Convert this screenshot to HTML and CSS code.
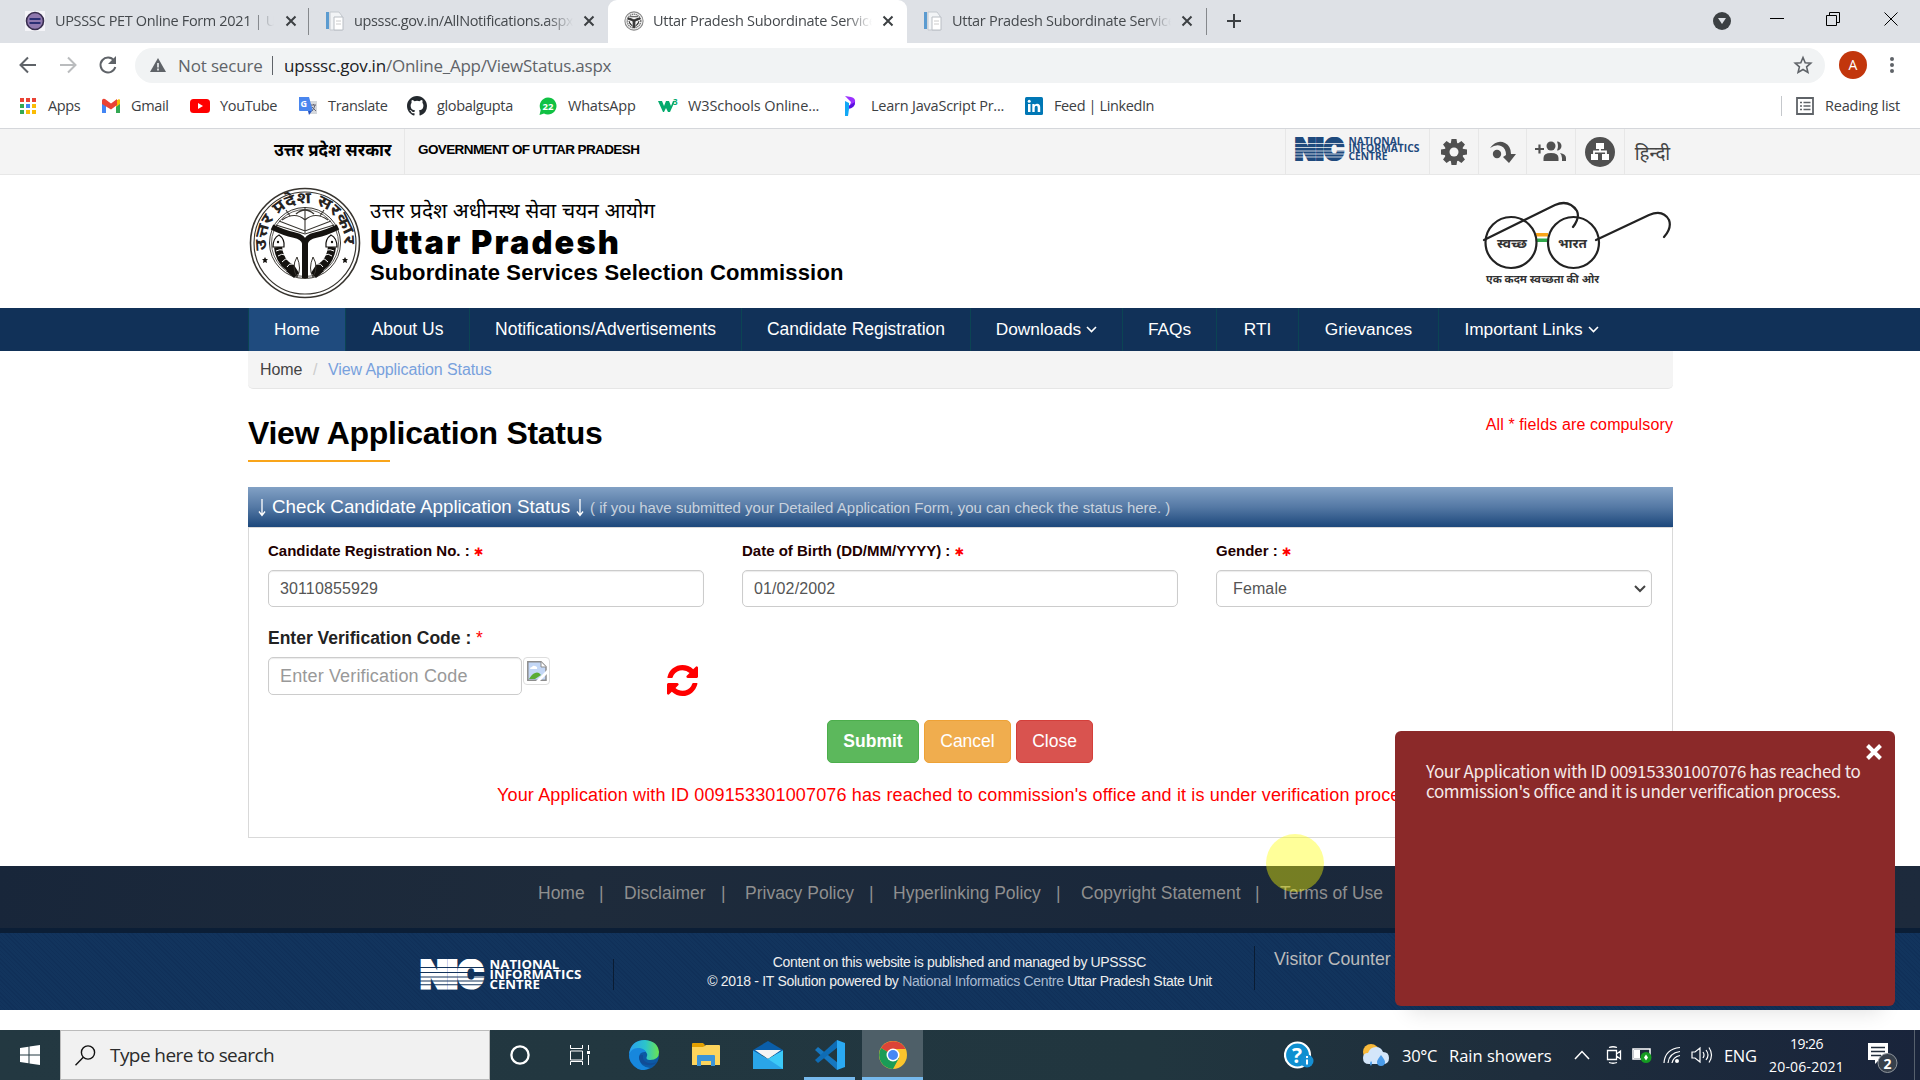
FILE: index.html
```html
<!DOCTYPE html>
<html lang="en">
<head>
<meta charset="utf-8">
<title>Uttar Pradesh Subordinate Services Selection Commission</title>
<link rel="stylesheet" href="styles.css">
</head>
<body>
<svg class="defs" width="0" height="0">
  <defs>
    <symbol id="x" viewBox="0 0 12 12"><path d="M1.500 1.500l9 9M10.500 1.500l-9 9" stroke="#3c4043" stroke-width="2" fill="none"/></symbol>
    <symbol id="page" viewBox="0 0 20 20"><path d="M1 1h3v17H1z" fill="#5b9bd0"/><path d="M5 1h9l3 4v14H5z" fill="#f2f4f6" stroke="#c3c8ce"/><path d="M9 6h9v13H9z" fill="#fff" stroke="#b9bec4"/><path d="M11 10h5M11 13h5" stroke="#ccc"/></symbol>
    <symbol id="nic" viewBox="0 0 126 24">
      <text x="1" y="22.500" class="nic-big" textLength="49" lengthAdjust="spacingAndGlyphs">NIC</text>
      <g class="nic-lines"><path d="M0 6.500h52M0 10.500h52M0 14h52M0 17h52M0 20h52"/></g>
      <text x="54.500" y="7.600" class="nic-small" textLength="54" lengthAdjust="spacingAndGlyphs">NATIONAL</text>
      <text x="54.500" y="15.400" class="nic-small" textLength="71" lengthAdjust="spacingAndGlyphs">INFORMATICS</text>
      <text x="54.500" y="23.200" class="nic-small" textLength="39" lengthAdjust="spacingAndGlyphs">CENTRE</text>
    </symbol>
    <symbol id="emblem" viewBox="0 0 112 112">
      <g fill="none" stroke="#37342f">
        <circle cx="56" cy="56" r="54.500" stroke-width="1.600" fill="#fff"/><circle cx="56" cy="56" r="51" stroke-width="1.200"/>
        <circle cx="56" cy="56" r="35.500" stroke-width="1"/><circle cx="56" cy="56" r="33.500" stroke-width=".8"/>
        <path d="M30 34l26 10 26-10M27 38l29 9 29-9M33 33Q46 24 56 33Q66 24 79 33M56 20v26M41 29l-4-6M71 29l4-6" stroke-width="1.100"/>
        <path d="M47 27q9-8 18 0" stroke-width="1.500"/>
      </g>
      <g fill="none" stroke="#14120f">
        <path d="M23 40q12 6 22 8 10 2 11 9 1-7 11-9 10-2 22-8" stroke-width="5.500"/>
        <path d="M56 54v37" stroke-width="6"/>
        <path d="M29 60q2 17 15 22M83 60q-2 17-15 22" stroke-width="8"/>
      </g>
      <g fill="#fff" stroke="#14120f" stroke-width="1.200"><path d="M24 60q0-9 6-12 6 4 5 12zM88 60q0-9-6-12-6 4-5 12z"/></g>
      <g fill="#14120f">
        <circle cx="29" cy="55" r="1.200"/><circle cx="83" cy="55" r="1.200"/>
        <path d="M37 84l8-6 5 8-5 5zM75 84l-8-6-5 8 5 5zM16 70l1 2h2l-1.500 1.500.5 2.500-2-1-2 1 .5-2.500L13 72h2zM96 70l1 2h2l-1.500 1.500.5 2.500-2-1-2 1 .5-2.500L93 72h2z"/>
      </g>
      <g fill="none" stroke="#fff" stroke-width="1"><path d="M27 64q4-2 7-1M29 69q4-3 7-1M33 75q3-4 7-3M38 80q2-4 6-3M85 64q-4-2-7-1M83 69q-4-3-7-1M79 75q-3-4-7-3M74 80q-2-4-6-3"/></g>
      <g fill="none" stroke="#37342f"><path d="M48 70q-6 10 0 20 5-8 0-20M64 70q6 10 0 20-5-8 0-20"/></g>
      <path id="arc" d="M18.500 66A39 39 0 1 1 93.500 66" fill="none"/>
      <text class="emblem-text"><textPath href="#arc" textLength="132" lengthAdjust="spacingAndGlyphs" startOffset="3">उत्तर प्रदेश सरकार</textPath></text>
    </symbol>
  </defs>
</svg>

<header class="tabstrip">
  <div class="tab"><svg viewBox="0 0 20 20"><path d="M0 0h20v20H0z" fill="#f4f4f8"/><circle cx="10" cy="10" r="8.500" fill="#8f78ae" stroke="#372d4e" stroke-width="1.600"/><path d="M4.500 8h11M4.500 12h11" stroke="#2b2f74" stroke-width="2"/></svg><span class="t1">UPSSSC PET Online Form 2021 | UP</span><svg class="close"><use href="#x"/></svg></div>
  <div class="tab ruled"><svg><use href="#page"/></svg><span class="t2">upsssc.gov.in/AllNotifications.aspx</span><svg class="close"><use href="#x"/></svg></div>
  <div class="tab active"><svg viewBox="0 0 112 112"><circle cx="56" cy="56" r="51" fill="#f5f5f5" stroke="#888" stroke-width="6"/><circle cx="56" cy="56" r="38" fill="none" stroke="#777" stroke-width="8" stroke-dasharray="7 4"/><path d="M23 38q22 6 33 12 11-6 33-12v8q-22 8-28 12v34h-10V58q-8-6-28-12zM28 56q2 20 20 28M84 56q-2 20-20 28M34 32h44" fill="#333" stroke="#333" stroke-width="5"/></svg><span class="t3">Uttar Pradesh Subordinate Services</span><svg class="close"><use href="#x"/></svg></div>
  <div class="tab"><svg><use href="#page"/></svg><span class="t3">Uttar Pradesh Subordinate Services</span><svg class="close"><use href="#x"/></svg></div>
  <div class="newtab"><svg width="16" height="16" viewBox="0 0 16 16"><path d="M8 1v14M1 8h14" stroke="#3c4043" stroke-width="2"/></svg></div>
  <div class="winbtns">
    <svg class="media" width="18" height="18" viewBox="0 0 18 18"><circle cx="9" cy="9" r="9" fill="#3c4043"/><path d="M5 6h8l-4 6z" fill="#dee1e6"/></svg>
    <svg width="14" height="14" viewBox="0 0 14 14"><path d="M0 6.500h14" stroke="#000"/></svg>
    <svg width="14" height="14" viewBox="0 0 14 14"><path d="M.5 3.500h10v10H.5zM3.500 3.500v-3h10v10h-3" fill="none" stroke="#000"/></svg>
    <svg width="14" height="14" viewBox="0 0 14 14"><path d="M.5.5l13 13M13.500.5l-13 13" stroke="#000"/></svg>
  </div>
</header>

<div class="toolbar">
  <svg width="20" height="20" viewBox="0 0 20 20"><path d="M18 10H3M10 2.500L2.500 10l7.500 7.500" fill="none" stroke="#5f6368" stroke-width="2"/></svg>
  <svg width="20" height="20" viewBox="0 0 20 20"><path d="M2 10h15M10 2.500l7.500 7.500-7.500 7.500" fill="none" stroke="#babcbe" stroke-width="2"/></svg>
  <svg width="20" height="20" viewBox="0 0 20 20"><path d="M16 5.500A7.500 7.500 0 1 0 17.300 12" fill="none" stroke="#5f6368" stroke-width="2"/><path d="M18 1v8h-8z" fill="#5f6368"/></svg>
  <div class="omnibox">
    <svg width="16" height="14" viewBox="0 0 16 14"><path d="M8 0l8 14H0z" fill="#5f6368"/><path d="M8 5v4.500M8 10.500v2" stroke="#f1f3f4" stroke-width="1.600"/></svg>
    <span class="notsecure">Not secure</span><i></i>
    <span class="url"><b>upsssc.gov.in</b>/Online_App/ViewStatus.aspx</span>
    <svg width="20" height="20" viewBox="0 0 20 20"><path d="M10 2.500l2.200 5.200 5.600.5-4.200 3.700 1.300 5.500L10 14.500l-4.900 2.900 1.300-5.500-4.200-3.700 5.600-.5z" fill="none" stroke="#5f6368" stroke-width="1.600"/></svg>
  </div>
  <div class="avatar">A</div>
  <svg width="6" height="18" viewBox="0 0 6 18"><circle cx="3" cy="3" r="2" fill="#5f6368"/><circle cx="3" cy="9" r="2" fill="#5f6368"/><circle cx="3" cy="15" r="2" fill="#5f6368"/></svg>
</div>

<nav class="bookmarks">
  <a><svg viewBox="0 0 20 20"><path d="M2 2h4v4H2zM8 2h4v4H8zM14 2h4v4h-4z" fill="#ea4335"/><path d="M2 8h4v4H2zM2 14h4v4H2z" fill="#34a853"/><path d="M8 8h4v4H8z" fill="#4285f4"/><path d="M8 14h4v4H8zM14 8h4v4h-4zM14 14h4v4h-4z" fill="#fbbc05"/></svg><span class="b1">Apps</span></a>
  <a><svg viewBox="0 0 20 20"><path d="M1 4h4v13H1z" fill="#4285f4"/><path d="M15 4h4v13h-4z" fill="#34a853"/><path d="M15 5l3-2q1 0 1 2v3l-4 3z" fill="#fbbc04"/><path d="M1 5q0-3 3-2l6 4.500L16 3v6l-6 4.500L1 8z" fill="#ea4335"/></svg><span class="b2">Gmail</span></a>
  <a><svg viewBox="0 0 20 20"><rect y="3" width="20" height="14" rx="3.500" fill="#f00"/><path d="M8 7v6l5-3z" fill="#fff"/></svg><span class="b3">YouTube</span></a>
  <a><svg viewBox="0 0 20 20"><path d="M8 5h11v13H11z" fill="#d5d8dc"/><path d="M1 1h10l4 14H2q-1 0-1-1z" fill="#4a86ee"/><path d="M10 15h4l-3 4z" fill="#2553c0"/><text x="2.500" y="11" font-size="9" font-family="Open Sans" font-weight="700" fill="#fff">G</text><path d="M13 9h5M15.500 8v1M17 9q-1 4-3 6M14 11l4 4" stroke="#667" fill="none"/></svg><span class="b4">Translate</span></a>
  <a><svg viewBox="0 0 16 16"><path fill="#24292e" d="M8 0C3.580 0 0 3.580 0 8c0 3.540 2.290 6.530 5.470 7.590.4.070.55-.17.55-.38 0-.19-.01-.82-.01-1.490-2.010.37-2.530-.49-2.690-.94-.09-.23-.48-.94-.82-1.130-.28-.15-.68-.52-.01-.53.63-.01 1.080.58 1.230.82.72 1.210 1.870.87 2.330.66.070-.52.28-.87.51-1.070-1.780-.2-3.640-.89-3.640-3.950 0-.87.31-1.590.82-2.150-.08-.2-.36-1.020.08-2.120 0 0 .67-.21 2.200.82a7.600 7.600 0 0 1 4 0c1.530-1.040 2.200-.82 2.200-.82.44 1.100.16 1.920.08 2.120.51.56.82 1.270.82 2.150 0 3.070-1.870 3.750-3.650 3.950.29.25.54.73.54 1.480 0 1.070-.01 1.930-.01 2.200 0 .21.15.46.55.38A8.010 8.010 0 0 0 16 8c0-4.420-3.580-8-8-8z"/></svg><span class="b5">globalgupta</span></a>
  <a><svg viewBox="0 0 20 20"><path d="M10 1.500a8.500 8.500 0 1 1-4 16L1.500 19l1.200-5A8.500 8.500 0 0 1 10 1.500z" fill="#10c143"/><text x="4.500" y="13.500" font-size="9.500" font-family="Open Sans" font-weight="700" fill="#fff">22</text></svg><span class="b6">WhatsApp</span></a>
  <a><svg viewBox="0 0 20 20"><path d="M0 5h4l2 5 2-5h3l2 5 2-5h2l-5 11h-2L8 12l-2 4H5z" fill="#04aa6d"/><text x="15" y="8.500" font-size="8" font-family="Open Sans" font-weight="700" fill="#04aa6d">3</text></svg><span class="b7">W3Schools Online...</span></a>
  <a><svg viewBox="0 0 20 20"><path d="M4 0l6 1q5 1 4 6 0 4-6 5l2-6z" fill="#9b30ff"/><path d="M4 12l10-6q0 6-7 7z" fill="#5a10e0"/><path d="M4 5l4 2v6l-1 7H4z" fill="#12a8f5"/></svg><span class="b8">Learn JavaScript Pr...</span></a>
  <a><svg viewBox="0 0 20 20"><rect x="1" y="1" width="18" height="18" rx="1.500" fill="#0077b5"/><path d="M4 8h2.500v8H4zM8.300 8h2.300v1q1-1.300 2.600-1.300 3 0 3 3.600V16h-2.500v-4.300q0-1.900-1.300-1.900-1.700 0-1.700 2V16H8.300z" fill="#fff"/><circle cx="5.200" cy="5.200" r="1.500" fill="#fff"/></svg><span class="b9">Feed | LinkedIn</span></a>
  <a class="reading"><svg viewBox="0 0 20 20"><path d="M2 2h16v16H2z" fill="none" stroke="#5f6368" stroke-width="1.800"/><path d="M5 6.500h2M5 10h2M5 13.500h2M8.500 6.500h7M8.500 10h7M8.500 13.500h7" stroke="#5f6368" stroke-width="1.700"/></svg><span class="b10">Reading list</span></a>
</nav>

<main class="site">
  <div class="govbar">
    <span class="gov-hi">उत्तर प्रदेश सरकार</span>
    <span class="gov-en">GOVERNMENT OF UTTAR PRADESH</span>
    <div class="tools">
      <span class="nic-blue"><svg width="126" height="24"><use href="#nic"/></svg></span>
      <span><svg width="26" height="26" viewBox="0 0 26 26"><g fill="#505050"><circle cx="13" cy="13" r="9.500"/><g id="teeth"><path d="M10.500 0h5l1 6h-7zM10.500 26h5l1-6h-7zM0 10.500v5l6 1v-7zM26 10.500v5l-6 1v-7z"/></g><use href="#teeth" transform="rotate(45 13 13)"/></g><circle cx="13" cy="13" r="4.500" fill="#f4f4f4"/></svg></span>
      <span><svg width="28" height="24" viewBox="0 0 28 24"><circle cx="8" cy="14" r="4.200" fill="#505050"/><path d="M1 8Q8-1 16 3q6 3 6 11h5l-7 9-6-6 3-2q0-7-5-9-5-2-11 2z" fill="#505050"/></svg></span>
      <span><svg width="32" height="24" viewBox="0 0 32 24"><path d="M0 9h9M4.500 4.500v9" stroke="#505050" stroke-width="2.200"/><circle cx="16" cy="6" r="4.500" fill="#505050"/><path d="M8.500 21v-3q0-5 7.500-5t7.500 5v3zM22 1.500a4.500 4.500 0 1 1 0 9q2-4 0-9zM25 13q6 1 6 5v3h-4v-3q0-3-2-5z" fill="#505050"/></svg></span>
      <span><svg width="30" height="30" viewBox="0 0 30 30"><circle cx="15" cy="15" r="15" fill="#505050"/><path d="M11 6h8v6h-8zM6 17h7v6H6zM17 17h7v6h-7z" fill="#fff"/><path d="M15 12v3M9 18v-3.500h12V18" fill="none" stroke="#fff" stroke-width="1.800"/></svg></span>
      <span class="lang">हिन्दी</span>
    </div>
  </div>

  <div class="brand">
    <svg class="emblem" width="112" height="112"><use href="#emblem"/></svg>
    <div class="names">
      <div class="n1">उत्तर प्रदेश अधीनस्थ सेवा चयन आयोग</div>
      <div class="n2">Uttar Pradesh</div>
      <div class="n3">Subordinate Services Selection Commission</div>
    </div>
    <svg class="swachh" width="190" height="90" viewBox="1483 200 190 90">
      <path d="M1537 233h12v3.500h-12z" fill="#f9a51a"/><path d="M1537 238.500h12v3.500h-12z" fill="#2fa84a"/>
      <g fill="none" stroke="#222" stroke-width="2.200" stroke-linecap="round"><circle cx="1512" cy="242.500" r="25.500"/><circle cx="1574.500" cy="242.500" r="25.500"/><path d="M1485 240L1556 205q14-6 22 6 3 7-4 16M1597 240L1650 215q14-6 20 5 3 8-5 17"/></g>
      <text x="1498" y="248" class="sw" textLength="30" lengthAdjust="spacingAndGlyphs">स्वच्छ</text>
      <text x="1559" y="248" class="sw" textLength="29" lengthAdjust="spacingAndGlyphs">भारत</text>
      <text x="1487" y="283" class="sw tag" textLength="113" lengthAdjust="spacingAndGlyphs">एक कदम स्वच्छता की ओर</text>
    </svg>
  </div>

  <nav class="mainnav"><div class="navgrid">
    <a class="on">Home</a><a>About Us</a><a>Notifications/Advertisements</a><a>Candidate Registration</a><a>Downloads <svg width="11" height="7" viewBox="0 0 11 7"><path d="M1 1l4.500 4.500L10 1" fill="none" stroke="#fff" stroke-width="1.600"/></svg></a><a>FAQs</a><a>RTI</a><a>Grievances</a><a>Important Links <svg width="11" height="7" viewBox="0 0 11 7"><path d="M1 1l4.500 4.500L10 1" fill="none" stroke="#fff" stroke-width="1.600"/></svg></a>
  </div></nav>

  <section class="content">
    <div class="crumbs"><span>Home</span><i>/</i><a>View Application Status</a></div>
    <div class="headline"><h1>View Application Status</h1><p>All * fields are compulsory</p></div>
    <div class="panel">
      <div class="panel-head"><svg width="8" height="18" viewBox="0 0 8 18"><path d="M4 0v16M1 12.500l3 4 3-4" fill="none" stroke="#fff" stroke-width="1.300"/></svg><span class="ph1">Check Candidate Application Status</span><svg width="8" height="18" viewBox="0 0 8 18"><path d="M4 0v16M1 12.500l3 4 3-4" fill="none" stroke="#fff" stroke-width="1.300"/></svg><span class="ph2">( if you have submitted your Detailed Application Form, you can check the status here. )</span></div>
      <div class="panel-body">
        <div class="fields">
          <label><span>Candidate Registration No. : <em>✱</em></span><div class="input">30110855929</div></label>
          <label><span>Date of Birth (DD/MM/YYYY) : <em>✱</em></span><div class="input">01/02/2002</div></label>
          <label><span>Gender : <em>✱</em></span><div class="input select">Female<svg width="12" height="8" viewBox="0 0 12 8"><path d="M1 1l5 5 5-5" fill="none" stroke="#444" stroke-width="2"/></svg></div></label>
        </div>
        <div class="vlabel">Enter Verification Code : <em>*</em></div>
        <div class="verify">
          <div class="input code">Enter Verification Code</div>
          <div class="broken"><svg width="20" height="20" viewBox="0 0 20 20"><path d="M.8.800h13.200l5 5v13.400H.8z" fill="#c3d7f6" stroke="#8d8d8d" stroke-width="1.500"/><path d="M14 1v5h5" fill="#fff" stroke="#8d8d8d"/><path d="M3 8q0-2 2-2 1-2 3-1 3 1 2 3z" fill="#fff"/><path d="M2 18q5-8 10-6l2 2-6 4z" fill="#5aac34"/><path d="M9 20l11-11v4l-7 7z" fill="#fff"/></svg></div>
          <svg class="refresh" width="31" height="31" viewBox="0 0 1536 1536"><path fill="#f00" d="M1511 928q0 5-1 7-64 268-268 434.500T764 1536q-146 0-282.500-55T238 1324l-129 129q-19 19-45 19t-45-19-19-45V960q0-26 19-45t45-19h448q26 0 45 19t19 45-19 45l-137 137q71 66 161 102t187 36q134 0 250-65t186-179q11-17 53-117 8-23 30-23h192q13 0 22.500 9.500t9.500 22.500zM1536 128v448q0 26-19 45t-45 19h-448q-26 0-45-19t-19-45 19-45l138-138Q969 256 768 256q-134 0-250 65T332 500q-11 17-53 117-8 23-30 23H50q-13 0-22.500-9.500T18 608v-7q65-268 270-434.500T768 0q146 0 284 55.500T1297 212l130-129q19-19 45-19t45 19 19 45z"/></svg>
        </div>
        <div class="buttons"><button class="submit">Submit</button><button class="cancel">Cancel</button><button class="closeb">Close</button></div>
        <p class="result">Your Application with ID 009153301007076 has reached to commission's office and it is under verification process.</p>
      </div>
    </div>
  </section>

  <footer>
    <div class="links"><a>Home</a><i>|</i><a>Disclaimer</a><i>|</i><a>Privacy Policy</a><i>|</i><a>Hyperlinking Policy</a><i>|</i><a>Copyright Statement</a><i>|</i><a>Terms of Use</a></div>
    <div class="credits">
      <div class="nic-white"><svg width="165" height="31"><use href="#nic"/></svg></div>
      <div class="legal"><p class="l1">Content on this website is published and managed by UPSSSC</p><p class="l2">© 2018 - IT Solution powered by <a>National Informatics Centre</a> Uttar Pradesh State Unit</p></div>
      <div class="visitors">Visitor Counter</div>
    </div>
  </footer>
</main>

<div class="pointer"></div>
<aside class="toast"><svg width="18" height="18" viewBox="0 0 18 18"><path d="M2.500 2.500l13 13M15.500 2.500l-13 13" stroke="#fff" stroke-width="4"/></svg><p>Your Application with ID 009153301007076 has reached to<br><span>commission's office and it is under verification process.</span></p></aside>

<div class="taskbar">
  <div class="start"><svg width="20" height="20" viewBox="0 0 20 20"><path d="M0 3l8.500-1.200v7.700H0zM9.500 1.500L20 0v9.500H9.500zM0 10.500h8.500v7.700L0 17zM9.500 10.500H20V20L9.500 18.500z" fill="#fff"/></svg></div>
  <div class="search"><svg width="21" height="21" viewBox="0 0 21 21"><circle cx="13" cy="7.500" r="6.600" fill="none" stroke="#111" stroke-width="1.400"/><path d="M8.300 12.300L.5 20.200" stroke="#111" stroke-width="1.400"/></svg><span>Type here to search</span></div>
  <div class="apps">
    <span><svg width="20" height="20" viewBox="0 0 20 20"><circle cx="10" cy="10" r="8.600" fill="none" stroke="#fff" stroke-width="2.300"/></svg></span>
    <span><svg width="20" height="20" viewBox="0 0 20 20"><path d="M.5 0v3.500h12V0M.5 6h12v9H.5zM.5 20v-3.500h12V20M18.500 0v5M18.500 10v10" fill="none" stroke="#fff"/><path d="M17 6h3v3h-3z" fill="#fff"/></svg></span>
    <span><svg width="30" height="30" viewBox="0 0 30 30"><defs><linearGradient id="e1"><stop stop-color="#2a9ff0"/><stop offset=".55" stop-color="#2cc4cb"/><stop offset="1" stop-color="#6be44f"/></linearGradient></defs><circle cx="15" cy="15" r="15" fill="#0c59a4"/><path d="M0 14Q2 0 16 0q13 1 14 12 0 8-9 8-5 0-3-4 1-2-2-5-6-5-12 0z" fill="url(#e1)"/><path d="M0 15q2-7 9-7 6 0 8 4-7-1-7 6 1 9 11 10-9 5-16-2Q0 21 0 15z" fill="#1787dd"/><path d="M10 17q0 7 8 8 6 1 10-3-5 2-9 1-6-2-5-8-3-1-4 2z" fill="#114c96"/></svg></span>
    <span><svg width="28" height="24" viewBox="0 0 28 24"><path d="M0 1q0-1 1-1h10l2 2-2 4H0z" fill="#e3a000"/><path d="M0 4h11l3-2h13q1 0 1 1v19H0z" fill="#fdd45c"/><path d="M5 23V13q0-1 1-1h16q1 0 1 1v10h-4v-5H9v5z" fill="#3c94d8"/></svg></span>
    <span><svg width="30" height="28" viewBox="0 0 30 28"><path d="M0 9L15 0l15 9v5H0z" fill="#0a5ea9"/><path d="M2 9h26L15 18z" fill="#f4f4f4"/><path d="M0 9.500l15 8.500 15-8.500V28H0z" fill="#2aa5e8"/><path d="M15 18L30 9.500V28z" fill="#3cc9f7"/></svg></span>
    <span class="run"><svg width="30" height="30" viewBox="0 0 30 30"><path d="M0 10l3-3 20 16-1 7z" fill="#1677c0"/><path d="M0 20l3 3L23 7l-1-7z" fill="#0e6cb5"/><path d="M22 0l8 3v24l-8 3z" fill="#2aa9f3"/></svg></span>
    <span class="run cur"><svg width="28" height="28" viewBox="0 0 28 28"><circle cx="14" cy="14" r="14" fill="#fbc52d"/><path d="M14 14L2 7A14 14 0 0 1 26.500 8H14z" fill="#dc4437"/><path d="M2 7A14 14 0 0 0 14 28l6-11-6-3z" fill="#1a9c57"/><circle cx="14" cy="14" r="6.500" fill="#fff"/><circle cx="14" cy="14" r="5" fill="#4688f4"/></svg></span>
  </div>
  <div class="tray">
    <span><svg width="30" height="28" viewBox="0 0 30 28"><circle cx="13.500" cy="14" r="12.500" fill="#0f8fd0" stroke="#fff" stroke-width="2.200"/><text x="8" y="22" font-family="Open Sans" font-size="21" font-weight="700" fill="#fff">?</text><circle cx="23" cy="20" r="6.500" fill="#168fd3"/><path d="M23 18.500v5M23 15v2" stroke="#fff" stroke-width="2"/></svg></span>
    <span><svg width="26" height="22" viewBox="0 0 26 22"><circle cx="8" cy="8" r="8" fill="#f8b93b"/><path d="M6 20q-6 0-6-6 0-5 5-5 2-6 8-6 5 0 7 5 6 0 6 6t-6 6z" fill="#d4e6fa"/><path d="M18 11q4 5 4 7a4 4 0 0 1-8 0q0-2 4-7z" fill="#4a9be8"/><path d="M8 17q2 2 0 5-2-2 0-5z" fill="#4a9be8"/></svg></span>
    <span class="wt k1">30°C</span><span class="wt k2">Rain showers</span>
    <span><svg width="16" height="10" viewBox="0 0 16 10"><path d="M1 9l7-7.500L15 9" fill="none" stroke="#fff" stroke-width="1.500"/></svg></span>
    <span><svg width="16" height="18" viewBox="0 0 16 18"><path d="M1.500 4.500h9v9h-9zM10.500 8l4-3v8l-4-3M3 1.500q4-1.500 8 0M3 16.500q4 1.500 8 0" fill="none" stroke="#fff" stroke-width="1.300"/></svg></span>
    <span><svg width="20" height="16" viewBox="0 0 20 16"><path d="M1 2h17v10H1z" fill="none" stroke="#fff" stroke-width="1.500"/><path d="M2 3h6v8H2z" fill="#fff"/><circle cx="14" cy="10.500" r="5.500" fill="#159b22"/><path d="M14 7.500l2 3-2 3-2-3z" fill="#fff"/></svg></span>
    <span><svg width="18" height="18" viewBox="0 0 18 18"><g fill="none" stroke="#fff" stroke-width="1.200"><path d="M1 17Q2 3 17 1.500M5 17Q6 7 17 5.500M9 17q1-6 8-7.500"/></g><circle cx="14" cy="15" r="2" fill="#fff"/></svg></span>
    <span><svg width="22" height="18" viewBox="0 0 22 18"><path d="M1 6h3l5-4v14l-5-4H1zM12 6q2 3 0 6M15 4q4 5 0 10M18 1.500q5 7.500 0 15" fill="none" stroke="#fff" stroke-width="1.200"/></svg></span>
    <span class="wt k3">ENG</span>
    <span class="clock"><b>19:26</b><b class="date">20-06-2021</b></span>
    <span class="notif"><svg width="32" height="32" viewBox="0 0 32 32"><path d="M1 1h20v17h-9l-4 4v-4H1z" fill="#fff"/><path d="M4 5.500h14M4 9.500h14M4 13.500h10" stroke="#222d3c" stroke-width="1.500"/><circle cx="20.500" cy="21" r="9.500" fill="#37404c" stroke="#8f959c"/><text x="16.500" y="26.500" font-family="Open Sans" font-weight="700" font-size="14" fill="#fff">2</text></svg></span>
  </div>
</div>
</body>
</html>
```
FILE: styles.css
```css
* { box-sizing: border-box; }
body { margin: 0; width: 1920px; height: 1080px; overflow: hidden; background: #fff; font-family: "Liberation Sans", Arial, "Noto Sans Devanagari", sans-serif; display: flex; flex-direction: column; position: relative; }
p, h1 { margin: 0; }
svg { display: block; flex: none; }
.defs { position: absolute; }
span, a, b, p { white-space: nowrap; }

/* browser chrome */
.tabstrip, .toolbar, .bookmarks, .taskbar { font-family: "Open Sans", "Noto Sans", sans-serif; }
.tabstrip { height: 43px; background: #dee1e6; padding-left: 9px; display: grid; grid-template-columns: 299px 300px 299px 299px 60px 1fr; }
.tab { display: grid; grid-template-columns: 20px 219px 12px; column-gap: 9px; padding-left: 16px; padding-bottom: 1px; align-items: center; position: relative; font-size: 14.500px; color: #45494d; }
.tab > svg { width: 20px; height: 20px; }
.tab .close { width: 12px; height: 12px; margin-left: 1px; }
.tab span { overflow: hidden; margin-bottom: 1px; -webkit-mask-image: linear-gradient(90deg, #000 88%, transparent); mask-image: linear-gradient(90deg, #000 88%, transparent); }
.tab.ruled { border-left: 1px solid #85888c; border-image: linear-gradient(transparent 9px, #85888c 9px, #85888c 34px, transparent 34px) 1; }
.tab.active { background: #fff; border-radius: 9px 9px 0 0; }
.tab:first-child { column-gap: 10px; }
.newtab { display: flex; align-items: center; padding-left: 19px; padding-bottom: 1px; border-left: 1px solid; border-image: linear-gradient(transparent 9px, #85888c 9px, #85888c 34px, transparent 34px) 1; }
.winbtns { display: grid; grid-template-columns: 58px 56px 58px 14px; justify-content: end; align-items: center; padding-right: 22px; padding-bottom: 6px; }
.media { margin: 5px 0 0 1px; }
.t1 { letter-spacing: -.34px; } .t2 { letter-spacing: -.36px; } .t3 { letter-spacing: -.28px; }
.toolbar { height: 45px; display: grid; grid-template-columns: 40px 40px 37px 1690px 23px 30px 9px 10px; align-items: center; padding: 0 0 1px 18px; }
.omnibox { height: 35px; border-radius: 18px; background: #f1f3f4; display: grid; grid-template-columns: 28px 94px 12px 1509px 20px; align-items: center; padding-left: 15px; font-size: 17px; color: #5f6368; }
.omnibox i { width: 1px; height: 19px; background: #5f6368; }
.omnibox b { font-weight: 400; color: #202124; }
.notsecure { letter-spacing: -.15px; } .url { letter-spacing: -.23px; }
.avatar { grid-column: 5 / 7; width: 28px; height: 28px; margin-left: 14px; border-radius: 50%; background: #c2360c; color: #fff; font-size: 14px; line-height: 28px; text-align: center; }
.toolbar > svg:last-child { grid-column: 7; margin-left: 11px; }
.bookmarks { height: 41px; border-bottom: 1px solid #d5d7db; display: grid; grid-template-columns: 83px 89px 108px 109px 131px 120px 183px 183px 757px 130px; padding: 0 0 5px 18px; align-items: center; font-size: 14.500px; color: #3c4043; }
.bookmarks a { display: grid; grid-template-columns: 20px 1fr; column-gap: 10px; align-items: center; }
.bookmarks svg { width: 20px; height: 20px; }
.bookmarks span { letter-spacing: -.35px; }
.bookmarks .b6, .bookmarks .b8, .bookmarks .b10 { letter-spacing: -.22px; }
.bookmarks .b7 { letter-spacing: -.1px; }
.bookmarks .b9 { letter-spacing: -.38px; }
.bookmarks .reading { border-left: 1px solid #c5c8cc; padding-left: 13px; height: 20px; }

/* site header */
.site { height: 901px; }
.govbar { height: 46px; background: #f4f4f4; border-bottom: 1px solid #e7e7e7; display: grid; grid-template-columns: 156px 881px 1fr; padding-left: 249px; align-items: stretch; line-height: 41px; color: #000; }
.gov-hi { font-size: 16.800px; font-weight: 700; padding-left: 25px; border-right: 1px solid #e7e7e7; line-height: 44px; }
.gov-en { font-size: 13.500px; font-weight: 700; padding-left: 13px; letter-spacing: -.6px; }
.tools { display: grid; grid-template-columns: 144px 49px 48px 49px 49px 60px; margin-left: -1px; }
.tools span { display: flex; justify-content: center; align-items: center; border-left: 1px solid #e7e7e7; }
.tools .nic-blue { padding-bottom: 6px; padding-right: 1px; }
.tools .lang { font-size: 18.800px; color: #444; padding-right: 4px; padding-top: 3px; }
.nic-blue { fill: #1f4a7d; color: #1f4a7d; stroke: #f4f4f4; }
.nic-white { fill: #fff; color: #fff; stroke: #12335b; }
.nic-big { font: 900 30px "Inter", "Liberation Sans", sans-serif; stroke: currentColor; stroke-width: 2.500; }
.nic-small { font: 700 9.800px "Open Sans", sans-serif; stroke: none; }
.nic-lines { stroke-width: .8; fill: none; }
.brand { height: 133px; display: grid; grid-template-columns: 121px 1112px 190px; padding-left: 249px; }
.emblem { margin-top: 12px; }
.emblem-text { font: 700 16px "Noto Sans Devanagari", "Noto Sans", sans-serif; fill: #26231f; }
.names { padding-top: 19px; color: #000; }
.n1 { font-size: 20.800px; line-height: 34px; height: 34px; }
.n2 { font-family: "Inter", "Liberation Sans", sans-serif; font-size: 32.500px; font-weight: 900; line-height: 30px; letter-spacing: 2.150px; }
.n3 { font-size: 22px; font-weight: 700; line-height: 30px; letter-spacing: .16px; }
.swachh { margin-top: 25px; }
.sw { font: 700 12px "Noto Sans Devanagari", "Noto Sans", sans-serif; fill: #333; }
.tag { font-size: 11.500px; }
.mainnav { height: 43px; background: #113158; padding-left: 248px; }
.navgrid { display: grid; grid-template-columns: 97px 124px 272px 229px 152px 94px 82px 140px 186px; height: 43px; }
.navgrid a { display: flex; justify-content: center; align-items: center; gap: 5px; color: #fff; font-size: 17.500px; letter-spacing: 0; border-left: 1px solid #0b4453; }
.navgrid a:nth-child(n+5) { font-size: 17.300px; }
.navgrid .on { background: #1f4b7e; font-size: 17.200px; }

/* page content */
.content { width: 1425px; margin-left: 248px; height: 515px; }
.crumbs { height: 38px; background: #f4f4f4; border-bottom: 1px solid #e6e6e6; border-radius: 0 0 5px 5px; display: grid; grid-template-columns: 53px 15px 1fr; align-items: center; padding: 0 0 0 12px; font-size: 16px; letter-spacing: -.1px; color: #444; }
.crumbs i { color: #ccc; font-style: normal; } .crumbs a { color: #78a1dd; }
.headline { display: flex; justify-content: space-between; height: 73px; margin-bottom: 25px; }
.headline h1 { font-size: 32px; line-height: 38px; padding-top: 25px; height: 73px; letter-spacing: -.28px; color: #000; border-bottom: 2px solid; border-image: linear-gradient(90deg, #f9a51a 142px, transparent 142px) 1; }
.headline p { color: #f00; font-size: 16px; letter-spacing: .12px; padding-top: 27px; }
.panel { border: 1px solid #d9d9d9; border-top: 0; height: 351px; }
.panel-head { margin: 0 -1px; height: 40px; background: linear-gradient(#82a1c5, #5579a5 50%, #1c477b); color: #fff; display: grid; grid-template-columns: 14px 304px 14px 1fr; align-items: center; padding-left: 10px; }
.panel-head svg { margin-top: 2px; }
.ph1 { font-size: 18.750px; } .ph2 { font-size: 15px; color: #c9d2dd; padding-top: 1px; }
.panel-body { border-top: 1px solid #d9d9d9; padding: 13px 19px 0; }
.fields { display: grid; grid-template-columns: repeat(3, 436px); column-gap: 38px; }
label span { display: block; font-size: 15px; font-weight: 700; line-height: 20px; height: 29px; color: #220000; }
em { color: #f00; font-style: normal; } label em { font-family: "DejaVu Sans"; font-size: 11.500px; line-height: 10px; }
.input { height: 37px; border: 1px solid #ccc; border-radius: 5px; box-shadow: inset 0 1px 1px rgba(0,0,0,.08); padding-left: 11px; display: flex; align-items: center; font-size: 16px; letter-spacing: .12px; color: #555; }
.select { padding: 0 5px 0 16px; justify-content: space-between; }
.vlabel { font-size: 17.500px; font-weight: 700; color: #222; line-height: 22px; margin: 20px 0 8px; height: 22px; }
.vlabel em { font-weight: 400; }
.verify { display: grid; grid-template-columns: 254px 145px 31px; align-items: start; height: 63px; }
.code { height: 38px; font-size: 18px; color: #999; letter-spacing: .15px; }
.broken { width: 27px; height: 28px; border: 1px solid #ddd; border-radius: 4px; padding: 3px; margin-left: 1px; }
.refresh { margin-top: 8px; }
.buttons { display: grid; grid-template-columns: 92px 87px 77px; gap: 5px; justify-content: center; margin-right: 1px; }
button { height: 43px; border: 1px solid; border-radius: 5px; color: #fff; font: 17.500px "Liberation Sans", sans-serif; padding: 0; }
.submit { background: #5cb85c; border-color: #4cae4c; font-weight: 700; } .cancel { background: #f0ad4e; border-color: #eea236; } .closeb { background: #d9534f; border-color: #d43f3a; }
.result { color: #f00; font-size: 18px; letter-spacing: .15px; text-align: center; margin-top: 21px; line-height: 22px; }

/* footer */
footer { color: #8f8f8f; }
.links { height: 67px; background: linear-gradient(100deg, #18263a, #1e2b3b 30%, #1a283b 60%, #1d2a3c); border-bottom: 5px solid #0b1e36; display: grid; grid-template-columns: 58px 28px 94px 27px 121px 27px 160px 28px 171px 28px 110px; padding: 16px 0 0 538px; font-size: 17.500px; line-height: 22px; }
.links i { font-style: normal; padding-left: 3px; }
.credits { height: 77px; background: #12345d repeating-linear-gradient(45deg, rgba(0,20,60,.12) 0 1px, transparent 1px 3px); display: grid; grid-template-columns: 196px 641px 200px; padding-left: 418px; }
.nic-white { padding-top: 26px; height: 57px; border-right: 1px solid; border-image: linear-gradient(transparent 26px, #0a1c33 26px) 1; }
.legal { padding: 20px 0 0 51px; font-size: 14px; letter-spacing: -.34px; line-height: 19px; text-align: center; color: #eee; border-right: 1px solid; border-image: linear-gradient(transparent 14px, #0a1c33 14px, #0a1c33 57px, transparent 57px) 1; }
.legal .l2 { letter-spacing: -.3px; }
.legal a { color: #a9bad0; }
.visitors { font-size: 17.700px; color: #bbb; padding: 16px 0 0 19px; }

/* overlays */
.pointer { position: absolute; left: 1266px; top: 834px; width: 58px; height: 58px; border-radius: 50%; background: rgba(255,255,0,.4); }
.toast { position: absolute; left: 1395px; top: 731px; width: 500px; height: 275px; background: #8b2929; border-radius: 6px; color: #f5eaea; font: 17px/20px "Noto Sans CJK SC", "Noto Sans", sans-serif; letter-spacing: -.36px; padding: 30px 0 0 31px; box-shadow: 0 20px 20px -14px rgba(0,0,0,.12); }
.toast svg { position: absolute; right: 12px; top: 12px; }

/* taskbar */
.taskbar { height: 50px; margin-top: auto; background: linear-gradient(90deg, #233841, #21363f 60%, #1e2d3c 80%, #19243b); display: grid; grid-template-columns: 60px 430px 433px 1fr; color: #fff; }
.start { display: grid; place-items: center; }
.search { background: #f1f1f1; border: 1px solid #bbb; display: flex; align-items: center; gap: 14px; padding-left: 14px; color: #2b2b2b; font-size: 19px; }
.search span { letter-spacing: -.57px; }
.apps { display: grid; grid-template-columns: 60px 60px 68px 56px 68px 60px 61px; }
.apps span { display: grid; place-items: center; }
.apps .run { margin: 0 7px 0 2px; box-shadow: inset 0 -3px #76b9ed; }
.apps .cur { margin: 0; background: #4e5f68; }
.tray { display: grid; grid-template-columns: 31px 87px 47px 125px 32px 26px 31px 28px 34px 44px 100px 32px; padding-left: 361px; align-items: center; height: 50px; justify-content: start; border-right: 1px solid #56606d; margin-right: 5px; }
.tray > :nth-child(2) { margin-left: 48px; }
.wt { font-size: 16.500px; letter-spacing: -.3px; }
.k2 { letter-spacing: 0; }
.k3 { margin-left: -1px; }
.clock { text-align: center; margin-right: 23px; margin-left: -2px; font-size: 14px; letter-spacing: -.5px; }
.clock b { display: block; font-weight: 400; line-height: 23px; }
.clock .date { letter-spacing: .2px; }
.notif { padding-top: 6px; margin-left: -2px; }
```
